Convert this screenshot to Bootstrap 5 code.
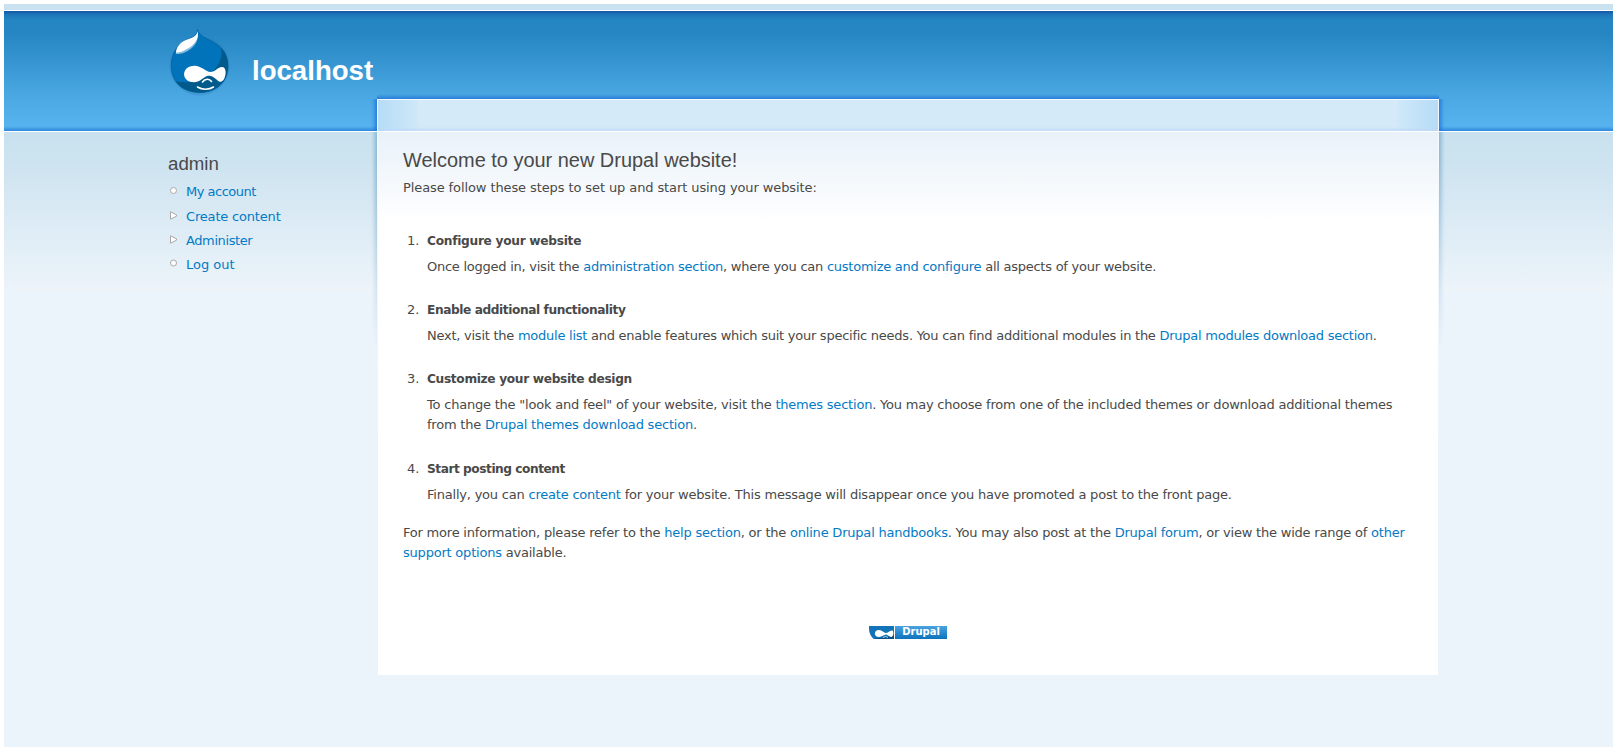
<!DOCTYPE html>
<html lang="en">
<head>
<meta charset="utf-8">
<title>localhost</title>
<link href="https://cdn.jsdelivr.net/npm/bootstrap@5.3.0/dist/css/bootstrap.min.css" rel="stylesheet">
<style>
  body { background: #fff; padding: 4px; color: #494949; font: 13px/20px "DejaVu Sans", Verdana, sans-serif; height: 751px; overflow: hidden; }
  a { color: #027ac6; text-decoration: none; }
  .page-shell {
    height: 743px;
    background:
      linear-gradient(#cae2f0, #cae2f0) 0 0 / 100% 6px no-repeat,
      linear-gradient(#fff, #fff) 0 6px / 100% 1px no-repeat,
      linear-gradient(#1257a4 0, #1a68b2 2px, #2078ba 4px, #2385c2 9px, #2586c3 22px, #4ca9e4 88px, #57b3ed 115px, #52abea 116px, #2c87df 120px) 0 7px / 100% 120px no-repeat,
      linear-gradient(#fff, #fff) 0 127px / 100% 1px no-repeat,
      linear-gradient(#c9e1ee 0, #cde3f0 30px, #edf4fa 160px) 0 128px / 100% 160px no-repeat,
      #ebf3fb;
  }
  .page-wrap { width: 1271px; margin-left: 164px; }
  .side-col { width: 209px; }
  .brand-row { height: 95px; padding-top: 25px; }
  .site-name { font: bold 27.600px/32px "Liberation Sans", Arial, sans-serif; color: #fff; margin: 26px 0 0 20px; }
  h2, h1.page-title { font: 18.700px/26px "Liberation Sans", Arial, sans-serif; color: #494949; margin: 0; }
  h1.page-title { font-size: 19.950px; margin-bottom: 5px; }
  .side-menu { padding-top: 52px; }
  .side-menu ul { padding-top: 5px; }
  .side-menu li { display: flex; height: 24px; }
  .side-menu li:first-child { height: 25px; }
  .side-menu svg { margin: 4px 7px 0 1px; flex: none; }
  .main-panel {
    width: 1062px; height: 576px; margin-top: 95px; position: relative; padding: 47px 26px 0 25px;
    border: 1px solid transparent; border-bottom: 0;
    background:
      linear-gradient(#fff, #fff) 0 31px / 100% 1px no-repeat,
      linear-gradient(rgba(190,215,248,0), rgba(190,215,248,.8)) 0 27px / 100% 4px no-repeat,
      linear-gradient(90deg, #b6dcf6, #cfe8f9 40px, #d4eaf8 40px calc(100% - 40px), #cfe8f9 calc(100% - 40px), #b6dcf6) 0 0 / 100% 31px no-repeat,
      linear-gradient(#eaf2f9 0, #edf4fa 20px, #fff 90px) 0 32px / 100% 100% no-repeat;
    background-clip: padding-box; background-origin: padding-box;
  }
  /* bright outline and soft shadow fading down the sides of the panel */
  .panel-edge { position: absolute; inset: -1px; border: 1px solid #f4faff; border-bottom: 0; pointer-events: none;
    -webkit-mask-image: linear-gradient(#000 60px, transparent 400px); mask-image: linear-gradient(#000 60px, transparent 400px); }
  .edge-top { position: absolute; left: -1px; right: -1px; top: -6px; height: 5px; background: linear-gradient(rgba(30,115,215,0), rgba(30,115,215,.8)); }
  .edge-side { position: absolute; top: -1px; width: 6px; height: 250px; left: -7px;
    background: linear-gradient(270deg, rgba(30,115,215,.8), rgba(30,115,215,.15) 4px, rgba(30,115,215,0)) 0 0 / 100% 32px no-repeat,
      linear-gradient(270deg, rgba(90,150,190,.55), rgba(90,150,190,.12) 4px, rgba(90,150,190,0)) 0 33px / 100% 217px no-repeat;
    -webkit-mask-image: linear-gradient(#000 60px, transparent); mask-image: linear-gradient(#000 60px, transparent); }
  .edge-side.is-right { left: auto; right: -7px; transform: scaleX(-1); }
  .steps { list-style: none; margin: 33px 0 0; padding: 0; }
  .steps li { display: flex; margin-bottom: 23px; }
  .steps .num { width: 24px; padding-left: 4px; flex: none; }
  .steps strong { display: block; margin-bottom: 6px; font-size: 12.200px; }
  .steps p, .closing { margin: 0; white-space: nowrap; letter-spacing: -.21px; }
  .steps li:nth-child(3) { margin-bottom: 24px; }
  .steps li:last-child { margin-bottom: 18px; }
  .steps .ls-wide { letter-spacing: -.25px; }
  .ls-intro { letter-spacing: -.1px; }
  .ls-b1 { letter-spacing: -.285px; } .ls-b2 { letter-spacing: -.42px; } .ls-b3 { letter-spacing: -.335px; } .ls-b4 { letter-spacing: -.47px; }
  .ls-m1 { letter-spacing: -.5px; } .ls-m2 { letter-spacing: -.18px; } .ls-m3 { letter-spacing: -.4px; }
  .badge-text { font: bold 10px/12px "DejaVu Sans", sans-serif; color: #fff; width: 52px; height: 13px; margin-left: 1px; text-align: center; background: linear-gradient(#4aa3df, #0d72bd); }
  .powered { margin: 63px 0 0 466px; }
</style>
</head>
<body>
<div class="page-shell">
  <div class="page-wrap d-flex">
    <aside class="side-col">
      <header class="brand-row d-flex text-nowrap">
        <svg width="64" height="70" viewBox="0 0 64 70" class="flex-shrink-0">
          <ellipse cx="31.500" cy="37" rx="30" ry="29.500" fill="#1665a0" opacity=".18"/>
          <path d="M29.500 .5C31 7 39 9.500 46 13.500C55 18.500 60 27 60 37C60 53 48 63.500 32 63.500C15 63.500 3.300 53 3.300 37C3.300 26 8 17 17 12C23 9 30 7 29.500 .5Z" fill="#0073ba" stroke="#0a5f9c" stroke-width=".8"/>
          <path d="M53 19C58.500 24 60 31 60 37C60 53 48 63.500 32 63.500C21 63.500 12 59.500 7.500 52C11 53.500 18 53 24 53C36 52 57 38 53 19Z" fill="#005a8c"/>
          <path d="M29.500 3C31 11 28 16 22 20.500C17 24 12 25.500 8 25C7.500 22 11 15 18 11.500C24 9 29 8 29.500 3Z" fill="#83bcdd"/>
          <path d="M29.500 2C31 8 28.500 13 23 17.500C18 21 12 24 8 23.500C8.500 18 12 13.500 18 11C24 8.500 29 8 29.500 2Z" fill="#fff"/>
          <path d="M26.500 36.800C33 36.800 38 43 42.500 43C47 43 50 38 54 38C58 38 58.500 44 56.500 49C54.500 53.500 52 54 48.500 50.500C45 47 42 46 39 47C34.500 49 32 53.200 26 53.200C12.500 53.200 13 36.800 26.500 36.800Z" fill="#fff"/>
          <path d="M34.500 53C37 49.500 41.500 49.500 43.500 52.500M29.500 58C34 61 41 61 45.500 58" fill="none" stroke="#fff" stroke-width="1.600" stroke-linecap="round"/>
        </svg>
        <h1 class="site-name">localhost</h1>
      </header>
      <nav class="side-menu">
        <h2>admin</h2>
        <ul class="list-unstyled mb-0">
          <li><svg width="10" height="10"><circle cx="4.500" cy="4.500" r="3" fill="#fff" stroke="#aaa"/></svg><a href="#" class="ls-m1">My account</a></li>
          <li><svg width="10" height="10"><path d="M1.500 .8V8.200L7.500 5.200V3.800Z" fill="#fff" stroke="#aaa"/></svg><a href="#" class="ls-m2">Create content</a></li>
          <li><svg width="10" height="10"><path d="M1.500 .8V8.200L7.500 5.200V3.800Z" fill="#fff" stroke="#aaa"/></svg><a href="#" class="ls-m3">Administer</a></li>
          <li><svg width="10" height="10"><circle cx="4.500" cy="4" r="3" fill="#fff" stroke="#aaa"/></svg><a href="#">Log out</a></li>
        </ul>
      </nav>
    </aside>
    <main class="main-panel">
      <div class="panel-edge"></div><div class="edge-top"></div><div class="edge-side"></div><div class="edge-side is-right"></div>
      <h1 class="page-title">Welcome to your new Drupal website!</h1>
      <p class="mb-0 ls-intro">Please follow these steps to set up and start using your website:</p>
      <ol class="steps">
        <li><span class="num">1.</span><div><strong class="ls-b1">Configure your website</strong><p class="ls-wide">Once logged in, visit the <a href="#">administration section</a>, where you can <a href="#">customize and configure</a> all aspects of your website.</p></div></li>
        <li><span class="num">2.</span><div><strong class="ls-b2">Enable additional functionality</strong><p class="ls-wide">Next, visit the <a href="#">module list</a> and enable features which suit your specific needs. You can find additional modules in the <a href="#">Drupal modules download section</a>.</p></div></li>
        <li><span class="num">3.</span><div><strong class="ls-b3">Customize your website design</strong><p>To change the "look and feel" of your website, visit the <a href="#">themes section</a>. You may choose from one of the included themes or download additional themes<br>from the <a href="#">Drupal themes download section</a>.</p></div></li>
        <li><span class="num">4.</span><div><strong class="ls-b4">Start posting content</strong><p>Finally, you can <a href="#">create content</a> for your website. This message will disappear once you have promoted a post to the front page.</p></div></li>
      </ol>
      <p class="closing">For more information, please refer to the <a href="#">help section</a>, or the <a href="#">online Drupal handbooks</a>. You may also post at the <a href="#">Drupal forum</a>, or view the wide range of <a href="#">other<br>support options</a> available.</p>
      <a href="#" class="powered d-flex">
        <svg width="25" height="13" viewBox="0 0 25 13"><path d="M0 0H25V13H5C2 11 0 7 0 3Z" fill="#1273b7"/><path d="M3 13C9 12 19 12 25 8V13Z" fill="#0a5388"/><path d="M10 4C13 4 15 7 17 7C19 7 21 4 23.500 4.500C25 6 24.500 11 22 11C20 11 19 8.500 17 8.500C15 8.500 13 11 10 11C4.500 11 4.500 4 10 4Z" fill="#fff"/><path d="M14 11.500Q16.500 9.500 19 11.500" fill="none" stroke="#fff" stroke-width=".7"/></svg>
        <span class="badge-text">Drupal</span>
      </a>
    </main>
  </div>
</div>
<script src="https://cdn.jsdelivr.net/npm/bootstrap@5.3.0/dist/js/bootstrap.bundle.min.js"></script>
</body>
</html>
